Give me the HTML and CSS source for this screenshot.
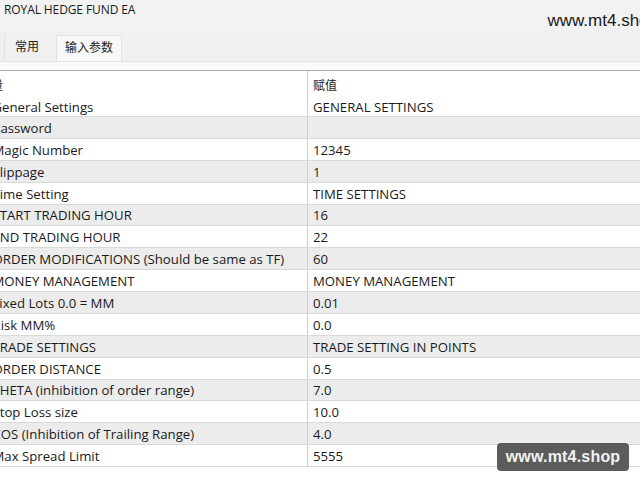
FILE: index.html
```html
<!DOCTYPE html>
<html>
<head>
<meta charset="utf-8">
<link rel="stylesheet" href="styles.css">
</head>
<body>
<div class="window">
  <div class="titlebar">
    <span class="title">ROYAL HEDGE FUND EA</span>
    <span class="site">www.mt4.shop</span>
  </div>
  <div class="tabs">
    <div class="tab">常用</div>
    <div class="tab active">输入参数</div>
  </div>
  <div class="panel">
    <div class="grid">
      <div class="row head"><div class="c1 headname">变量</div><div class="c2">赋值</div></div>
      <div class="row first"><div class="c1">General Settings</div><div class="c2">GENERAL SETTINGS</div></div>
      <div class="row alt"><div class="c1">Password</div><div class="c2"></div></div>
      <div class="row"><div class="c1">Magic Number</div><div class="c2">12345</div></div>
      <div class="row alt"><div class="c1">Slippage</div><div class="c2">1</div></div>
      <div class="row"><div class="c1">Time Setting</div><div class="c2">TIME SETTINGS</div></div>
      <div class="row alt"><div class="c1">START TRADING HOUR</div><div class="c2">16</div></div>
      <div class="row"><div class="c1">END TRADING HOUR</div><div class="c2">22</div></div>
      <div class="row alt"><div class="c1">ORDER MODIFICATIONS (Should be same as TF)</div><div class="c2">60</div></div>
      <div class="row"><div class="c1">MONEY MANAGEMENT</div><div class="c2">MONEY MANAGEMENT</div></div>
      <div class="row alt"><div class="c1">Fixed Lots 0.0 = MM</div><div class="c2">0.01</div></div>
      <div class="row"><div class="c1">Risk MM%</div><div class="c2">0.0</div></div>
      <div class="row alt"><div class="c1">TRADE SETTINGS</div><div class="c2">TRADE SETTING IN POINTS</div></div>
      <div class="row"><div class="c1">ORDER DISTANCE</div><div class="c2">0.5</div></div>
      <div class="row alt"><div class="c1">THETA (inhibition of order range)</div><div class="c2">7.0</div></div>
      <div class="row"><div class="c1">Stop Loss size</div><div class="c2">10.0</div></div>
      <div class="row alt"><div class="c1">COS (Inhibition of Trailing Range)</div><div class="c2">4.0</div></div>
      <div class="row"><div class="c1">Max Spread Limit</div><div class="c2">5555</div></div>
    </div>
    <div class="badge">www.mt4.shop</div>
  </div>
</div>
</body>
</html>
```
FILE: styles.css
```css
* { box-sizing: border-box; }
html, body { margin: 0; padding: 0; }
body {
  width: 640px;
  height: 480px;
  overflow: hidden;
  background: #f2f2f2;
  font-family: "Open Sans", "Noto Sans CJK SC", sans-serif;
  font-size: 13.2px;
  color: #1a1a1a;
}
.window { position: relative; width: 640px; height: 480px; }
.titlebar {
  height: 30px;
  display: flex;
  justify-content: space-between;
  align-items: flex-start;
  background: #f2f2f2;
}
.title {
  margin-left: 4px;
  margin-top: 1px;
  font-size: 12px;
  letter-spacing: -0.1px;
}
.site {
  font-family: "Liberation Sans", Arial, sans-serif;
  font-size: 17px;
  margin-top: 11px;
  margin-right: -18px;
  color: #1a1a1a;
  white-space: nowrap;
}
.tabs {
  height: 32px;
  display: flex;
  align-items: flex-end;
  padding-left: 4px;
  background: #f0f0f0;
  border-bottom: 1px solid #e4e4e4;
}
.tab {
  height: 26px;
  padding: 3px 10px 0 10px;
  font-family: "Noto Sans CJK SC", sans-serif;
  font-size: 12px;
  border-left: 1px solid #e2e2e2;
  color: #222;
  margin-bottom: 1px;
}
.tab.active {
  background: #f8f8f8;
  border: 1px solid #e2e2e2;
  border-bottom: none;
  height: 26px;
  margin-left: 7px;
  padding: 2px 8px 0 8px;
  margin-bottom: 0;
}
.panel {
  position: relative;
  height: 418px;
  background: #fafafa;
  padding-top: 8px;
}
.grid {
  margin-left: -10px;
  background: #fff;
  border-top: 1px solid #a8a8a8;
  height: 410px;
}
.row {
  display: grid;
  grid-template-columns: 318px 1fr;
  height: 21.875px;
  border-bottom: 1px solid #d9d9d9;
  background: #fff;
}
.row.alt { background: #ececec; }
.row.head { height: 25px; border-bottom: none; }
.row.first { height: 21px; }
.c1, .c2 {
  display: flex;
  align-items: center;
  padding-top: 1px;
  white-space: nowrap;
  overflow: hidden;
}
.c1 { padding-left: 2.5px; border-right: 1px solid #cfcfcf; }
.c2 { padding-left: 5px; }
.head .c1, .head .c2 { font-family: "Noto Sans CJK SC", sans-serif; font-size: 12px; padding-top: 2px; }
.headname { padding-left: 0; text-indent: -11px; }
.badge {
  position: absolute;
  left: 497px;
  top: 381px;
  width: 132px;
  height: 28px;
  border-radius: 4px;
  background: rgba(70, 70, 70, 0.88);
  color: #f2f2f2;
  font-family: "Liberation Sans", Arial, sans-serif;
  font-weight: bold;
  font-size: 16px;
  display: flex;
  align-items: center;
  justify-content: center;
  letter-spacing: 0.2px;
}
```
